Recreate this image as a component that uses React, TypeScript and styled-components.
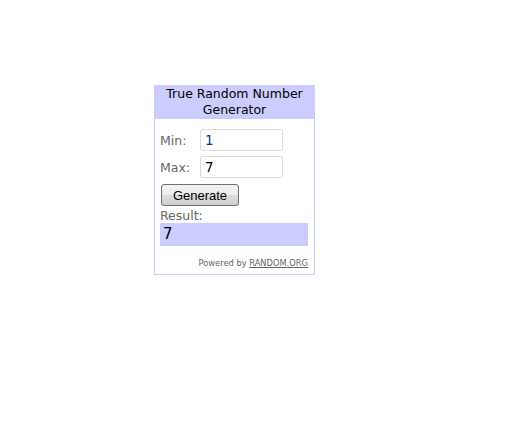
import React from "react";
import styled, { createGlobalStyle } from "styled-components";

const GlobalStyle = createGlobalStyle`
  html, body {
    margin: 0;
    padding: 0;
    background: #ffffff;
  }
  body {
    font-family: "DejaVu Sans", Verdana, sans-serif;
  }
`;

const Page = styled.div`
  width: 531px;
  height: 441px;
  padding: 85px 0 0 154px;
  box-sizing: border-box;
`;

const Widget = styled.div`
  width: 161px;
  box-sizing: border-box;
  border: 1px solid #ccccff;
  border-top: none;
  background: #ffffff;
`;

const Header = styled.div`
  background: #ccccff;
  color: #000000;
  font-size: 12.5px;
  line-height: 16px;
  text-align: center;
  padding: 1px 2px 1px;
  margin: 0 -1px;
`;

const Body = styled.div`
  padding: 10px 6px 6px 5px;
  display: flex;
  flex-direction: column;
`;

const FieldRow = styled.div`
  display: flex;
  align-items: center;
  margin-bottom: 5px;
`;

const Label = styled.span`
  width: 40px;
  font-size: 12.5px;
  color: #666666;
`;

const Input = styled.div<{ $blue?: boolean }>`
  width: 83px;
  height: 22px;
  box-sizing: border-box;
  border: 1px solid #dcdcdc;
  border-radius: 2px;
  padding: 0 4px;
  font-size: 13.5px;
  line-height: 20px;
  color: ${(p) => (p.$blue ? "#004080" : "#000000")};
`;

const Button = styled.button`
  align-self: flex-start;
  margin: 1px 0 0 1px;
  width: 78px;
  height: 22px;
  border: 1px solid #707070;
  border-radius: 3px;
  background: linear-gradient(#f2f2f2 0%, #ebebeb 50%, #dddddd 51%, #cfcfcf 100%);
  font-family: "Liberation Sans", Arial, sans-serif;
  font-size: 13px;
  color: #000000;
  padding: 0;
`;

const ResultLabel = styled.div`
  font-size: 12.5px;
  color: #666666;
  margin-top: 2px;
  line-height: 15px;
`;

const ResultBox = styled.div`
  background: #ccccff;
  height: 23px;
  padding: 0 3px;
  font-size: 15px;
  line-height: 23px;
  color: #000000;
`;

const Footer = styled.div`
  margin-top: 12px;
  text-align: right;
  font-size: 8.3px;
  color: #666666;
  a {
    color: #666666;
    text-decoration: underline;
  }
`;

export default function App() {
  return (
    <>
      <GlobalStyle />
      <Page>
        <Widget>
          <Header>
            True Random Number
            <br />
            Generator
          </Header>
          <Body>
            <FieldRow>
              <Label>Min:</Label>
              <Input $blue>1</Input>
            </FieldRow>
            <FieldRow>
              <Label>Max:</Label>
              <Input>7</Input>
            </FieldRow>
            <Button>Generate</Button>
            <ResultLabel>Result:</ResultLabel>
            <ResultBox>7</ResultBox>
            <Footer>
              Powered by <a href="#">RANDOM.ORG</a>
            </Footer>
          </Body>
        </Widget>
      </Page>
    </>
  );
}
